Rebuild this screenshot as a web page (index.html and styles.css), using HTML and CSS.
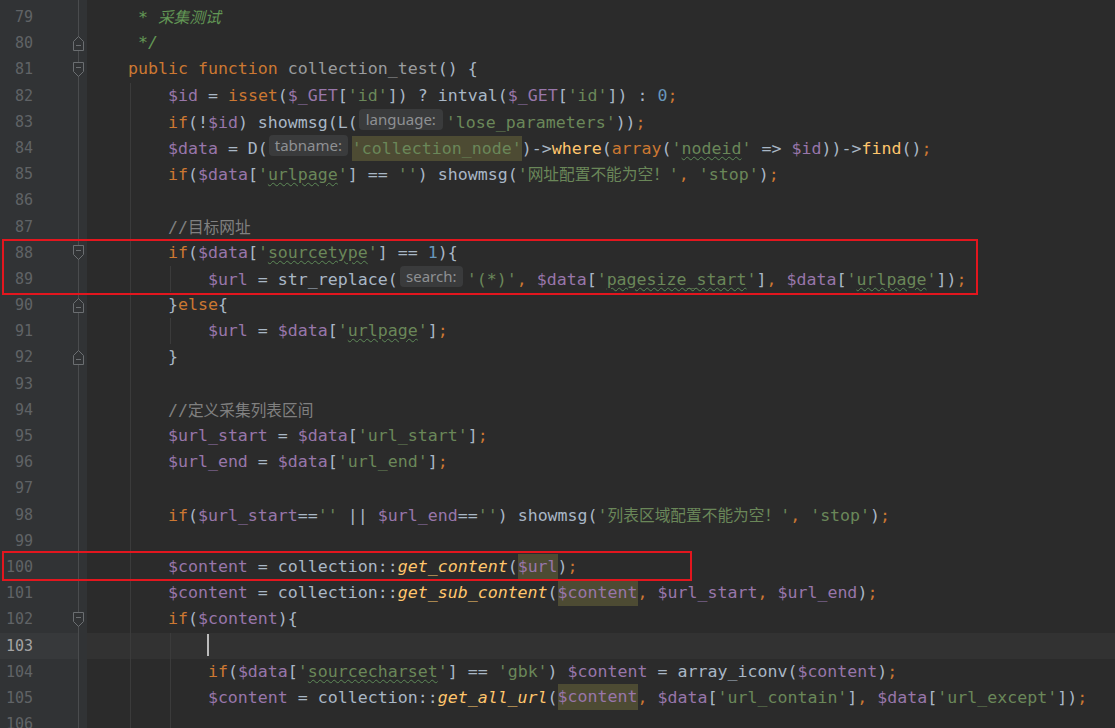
FILE: index.html
```html
<!DOCTYPE html>
<html lang="zh">
<head>
<meta charset="utf-8">
<title>collection_test</title>
<link rel="stylesheet" href="styles.css">
</head>
<body>
<div class="editor">
  <div class="row"><span class="ln">79</span><span class="fold"></span><span class="code">     <span class="doc">* <span class="cjk">采集测试</span></span></span></div>
  <div class="row"><span class="ln">80</span><span class="fold"><svg class="fm" viewBox="0 0 11 15" width="11" height="15"><path d="M0.5 5.5 L5.5 0.5 L10.5 5.5 V14.5 H0.5 Z"/><path d="M3 9.5 H8"/></svg></span><span class="code">     <span class="doc">*/</span></span></div>
  <div class="row"><span class="ln">81</span><span class="fold"><svg class="fm" viewBox="0 0 11 15" width="11" height="15"><path d="M0.5 0.5 H10.5 V9.5 L5.5 14.5 L0.5 9.5 Z"/><path d="M3 5.5 H8"/></svg></span><span class="code">    <span class="k">public function</span> <span class="u">collection_test</span>() {</span></div>
  <div class="row i1"><span class="ln">82</span><span class="fold"></span><span class="code">        <span class="v">$id</span> = <span class="k">isset</span>(<span class="v">$_GET</span>[<span class="s">'id'</span>]) ? intval(<span class="v">$_GET</span>[<span class="s">'id'</span>]) : <span class="n">0</span><span class="k">;</span></span></div>
  <div class="row i1"><span class="ln">83</span><span class="fold"></span><span class="code">        <span class="k">if</span>(!<span class="v">$id</span>) showmsg(L(<span class="hint h-lang">language:</span><span class="s">'lose_parameters'</span>))<span class="k">;</span></span></div>
  <div class="row i1"><span class="ln">84</span><span class="fold"></span><span class="code">        <span class="v">$data</span> = D(<span class="hint h-tab">tabname:</span><span class="s hl">'collection_node'</span>)-&gt;<span class="f">where</span>(<span class="k">array</span>(<span class="s">'<span class="t">nodeid</span>'</span> =&gt; <span class="v">$id</span>))-&gt;<span class="f">find</span>()<span class="k">;</span></span></div>
  <div class="row i1"><span class="ln">85</span><span class="fold"></span><span class="code">        <span class="k">if</span>(<span class="v">$data</span>[<span class="s">'<span class="t">urlpage</span>'</span>] == <span class="s">''</span>) showmsg(<span class="s">'<span class="cjk">网址配置不能为空！</span>'</span><span class="k">,</span> <span class="s">'stop'</span>)<span class="k">;</span></span></div>
  <div class="row i1"><span class="ln">86</span><span class="fold"></span><span class="code"></span></div>
  <div class="row i1"><span class="ln">87</span><span class="fold"></span><span class="code">        <span class="c">//<span class="cjk">目标网址</span></span></span></div>
  <div class="row i1"><span class="ln">88</span><span class="fold"><svg class="fm" viewBox="0 0 11 15" width="11" height="15"><path d="M0.5 0.5 H10.5 V9.5 L5.5 14.5 L0.5 9.5 Z"/><path d="M3 5.5 H8"/></svg></span><span class="code">        <span class="k">if</span>(<span class="v">$data</span>[<span class="s">'<span class="t">sourcetype</span>'</span>] == <span class="n">1</span>){</span></div>
  <div class="row i2"><span class="ln">89</span><span class="fold"></span><span class="code">            <span class="v">$url</span> = str_replace(<span class="hint h-search">search:</span><span class="s">'(*)'</span><span class="k">,</span> <span class="v">$data</span>[<span class="s">'<span class="t">pagesize_start</span>'</span>]<span class="k">,</span> <span class="v">$data</span>[<span class="s">'<span class="t">urlpage</span>'</span>])<span class="k">;</span></span></div>
  <div class="row i1"><span class="ln">90</span><span class="fold"><svg class="fm" viewBox="0 0 11 15" width="11" height="15"><path d="M0.5 5.5 L5.5 0.5 L10.5 5.5 V14.5 H0.5 Z"/><path d="M3 9.5 H8"/></svg></span><span class="code">        }<span class="k">else</span>{</span></div>
  <div class="row i2"><span class="ln">91</span><span class="fold"></span><span class="code">            <span class="v">$url</span> = <span class="v">$data</span>[<span class="s">'<span class="t">urlpage</span>'</span>]<span class="k">;</span></span></div>
  <div class="row i1"><span class="ln">92</span><span class="fold"><svg class="fm" viewBox="0 0 11 15" width="11" height="15"><path d="M0.5 5.5 L5.5 0.5 L10.5 5.5 V14.5 H0.5 Z"/><path d="M3 9.5 H8"/></svg></span><span class="code">        }</span></div>
  <div class="row i1"><span class="ln">93</span><span class="fold"></span><span class="code"></span></div>
  <div class="row i1"><span class="ln">94</span><span class="fold"></span><span class="code">        <span class="c">//<span class="cjk">定义采集列表区间</span></span></span></div>
  <div class="row i1"><span class="ln">95</span><span class="fold"></span><span class="code">        <span class="v">$url_start</span> = <span class="v">$data</span>[<span class="s">'url_start'</span>]<span class="k">;</span></span></div>
  <div class="row i1"><span class="ln">96</span><span class="fold"></span><span class="code">        <span class="v">$url_end</span> = <span class="v">$data</span>[<span class="s">'url_end'</span>]<span class="k">;</span></span></div>
  <div class="row i1"><span class="ln">97</span><span class="fold"></span><span class="code"></span></div>
  <div class="row i1"><span class="ln">98</span><span class="fold"></span><span class="code">        <span class="k">if</span>(<span class="v">$url_start</span>==<span class="s">''</span> || <span class="v">$url_end</span>==<span class="s">''</span>) showmsg(<span class="s">'<span class="cjk">列表区域配置不能为空！</span>'</span><span class="k">,</span> <span class="s">'stop'</span>)<span class="k">;</span></span></div>
  <div class="row i1"><span class="ln">99</span><span class="fold"></span><span class="code"></span></div>
  <div class="row i1"><span class="ln">100</span><span class="fold"></span><span class="code">        <span class="v">$content</span> = collection::<span class="fi">get_content</span>(<span class="v hl">$url</span>)<span class="k">;</span></span></div>
  <div class="row i1"><span class="ln">101</span><span class="fold"></span><span class="code">        <span class="v">$content</span> = collection::<span class="fi">get_sub_content</span>(<span class="v hl">$content</span><span class="k">,</span> <span class="v">$url_start</span><span class="k">,</span> <span class="v">$url_end</span>)<span class="k">;</span></span></div>
  <div class="row i1"><span class="ln">102</span><span class="fold"><svg class="fm" viewBox="0 0 11 15" width="11" height="15"><path d="M0.5 0.5 H10.5 V9.5 L5.5 14.5 L0.5 9.5 Z"/><path d="M3 5.5 H8"/></svg></span><span class="code">        <span class="k">if</span>(<span class="v">$content</span>){</span></div>
  <div class="row i2 cur"><span class="ln">103</span><span class="fold"></span><span class="code">            <span class="caret"></span></span></div>
  <div class="row i2"><span class="ln">104</span><span class="fold"></span><span class="code">            <span class="k">if</span>(<span class="v">$data</span>[<span class="s">'<span class="t">sourcecharset</span>'</span>] == <span class="s">'gbk'</span>) <span class="v">$content</span> = array_iconv(<span class="v">$content</span>)<span class="k">;</span></span></div>
  <div class="row i2"><span class="ln">105</span><span class="fold"></span><span class="code">            <span class="v">$content</span> = collection::<span class="fi">get_all_url</span>(<span class="v hl">$content</span><span class="k">,</span> <span class="v">$data</span>[<span class="s">'url_contain'</span>]<span class="k">,</span> <span class="v">$data</span>[<span class="s">'url_except'</span>])<span class="k">;</span></span></div>
  <div class="row i2"><span class="ln">106</span><span class="fold"></span><span class="code"></span></div>

  <div class="mark mark-a"></div>
  <div class="mark mark-b"></div>
</div>
</body>
</html>
```
FILE: styles.css
```css
html, body {
  margin: 0;
  padding: 0;
  width: 1115px;
  height: 728px;
  overflow: hidden;
  background: #2b2b2b;
}

.editor {
  position: relative;
  height: 728px;
  padding-top: 4px;
  box-sizing: border-box;
  background:
    linear-gradient(#4a4c4e, #4a4c4e) no-repeat 78px 0 / 1px 100%,
    linear-gradient(to right, #313335 0 87px, #2b2b2b 87px);
  font-family: "DejaVu Sans Mono", "Noto Sans CJK SC", monospace;
  font-size: 16.6px;
  color: #a9b7c6;
}

.row {
  display: flex;
  height: 26.2px;
  line-height: 26.2px;
}

.row.cur {
  background: linear-gradient(to right, #37393b 0 78px, transparent 78px 87px, #323232 87px);
}

.ln {
  flex: 0 0 33px;
  text-align: right;
  font-size: 15px;
  color: #606366;
}

.cur .ln {
  color: #a4a3a3;
}

.fold {
  flex: 0 0 54px;
  position: relative;
}

.fm {
  position: absolute;
  left: 40px;
  top: 5.5px;
  fill: #313335;
  stroke: #6b6e71;
  stroke-width: 1;
}

.code {
  flex: 1;
  white-space: pre;
  padding-left: 1px;
  background-repeat: no-repeat;
}

.i1 .code {
  background-image: linear-gradient(#3b3b3b, #3b3b3b);
  background-size: 1px 100%;
  background-position: 43px 0;
}

.i2 .code {
  background-image: linear-gradient(#3b3b3b, #3b3b3b), linear-gradient(#3b3b3b, #3b3b3b);
  background-size: 1px 100%, 1px 100%;
  background-position: 43px 0, 83px 0;
}

.k { color: #cc7832; }
.v { color: #9876aa; }
.s { color: #6a8759; }
.n { color: #6897bb; }
.c { color: #808080; }
.f { color: #ffc66d; }
.fi { color: #ffc66d; font-style: italic; }
.u { color: #9a9c9e; }
.doc { color: #629755; font-style: italic; }

.cjk {
  font-family: "Noto Sans CJK SC", sans-serif;
  font-size: 15.7px;
}

.t {
  text-decoration: underline wavy #5e8a58;
  text-decoration-thickness: 1px;
  text-underline-offset: 2px;
}

.hl {
  background: #4d4b33;
  padding: 3.45px 0;
}

.hint {
  display: inline-block;
  box-sizing: border-box;
  height: 21px;
  line-height: 21px;
  overflow: hidden;
  vertical-align: -2px;
  text-align: center;
  background: #3a3b3c;
  border-radius: 4px;
  color: #8e9093;
  font-family: "Noto Sans", sans-serif;
  font-size: 15px;
}

.h-lang { width: 84px; margin: 0 3px 0 1px; }
.h-tab { width: 79px; margin: 0 4px 0 1px; }
.h-search { width: 63px; margin: 0 4px 0 2px; }

.caret {
  display: inline-block;
  width: 2px;
  height: 22px;
  margin-left: -1px;
  vertical-align: -5.3px;
  background: #bbbbbb;
}

.mark {
  position: absolute;
  left: 2px;
  border: 2px solid #e3161e;
  box-sizing: border-box;
}

.mark-a {
  top: 239px;
  width: 976px;
  height: 56px;
}

.mark-b {
  top: 551px;
  width: 690px;
  height: 30px;
}
```
